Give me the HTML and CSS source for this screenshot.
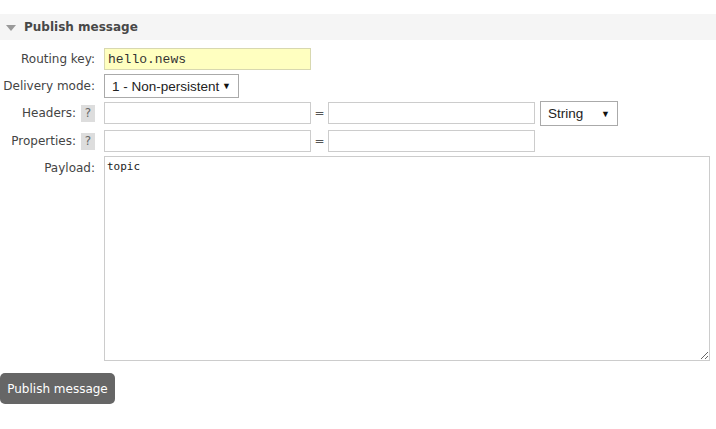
FILE: index.html
```html
<!DOCTYPE html>
<html>
<head>
<meta charset="utf-8">
<link rel="stylesheet" href="styles.css">
</head>
<body>
<div class="section">
  <h2 class="section-head"><span class="tri"></span>Publish message</h2>
  <div class="form">
    <div class="row">
      <label class="lbl">Routing key:</label>
      <input class="inp mono key" type="text" value="hello.news">
    </div>
    <div class="row row-dm">
      <label class="lbl">Delivery mode:</label>
      <div class="sel sel-dm"><span>1 - Non-persistent</span><span class="arrow">▼</span></div>
    </div>
    <div class="row row-h">
      <label class="lbl">Headers: <span class="help">?</span></label>
      <input class="inp" type="text">
      <span class="eq">=</span>
      <input class="inp" type="text">
      <div class="sel sel-str"><span>String</span><span class="arrow">▼</span></div>
    </div>
    <div class="row">
      <label class="lbl">Properties: <span class="help">?</span></label>
      <input class="inp" type="text">
      <span class="eq">=</span>
      <input class="inp" type="text">
    </div>
    <div class="row top">
      <label class="lbl lbl-top">Payload:</label>
      <textarea class="payload">topic</textarea>
    </div>
  </div>
  <button class="btn">Publish message</button>
</div>
</body>
</html>
```
FILE: styles.css
```css
html, body { margin: 0; padding: 0; background: #fff; }
body { font-family: "DejaVu Sans", Verdana, sans-serif; font-size: 12px; color: #444; }
.section { padding-top: 14px; }
.section-head {
  margin: 0; height: 26px; background: #f5f5f5; color: #484848;
  font-size: 12px; font-weight: bold; display: flex; align-items: center;
  padding-left: 6px; box-sizing: border-box;
}
.tri {
  width: 0; height: 0; border-left: 5px solid transparent; border-right: 5px solid transparent;
  border-top: 6px solid #999; margin-right: 8px; margin-top: 1px;
}
.form { padding-top: 8px; display: flex; flex-direction: column; gap: 4px; }
.row { display: flex; align-items: center; height: 22px; }
.row-dm { height: 24px; }
.row-h { height: 24px; align-items: flex-start; }
.row-h .lbl, .row-h .eq { height: 22px; }
.row.top { align-items: flex-start; height: auto; }
.lbl {
  width: 95px; text-align: right; margin-right: 9px; color: #444; font-size: 12px;
  display: flex; justify-content: flex-end; align-items: center; gap: 5px; white-space: nowrap;
}
.lbl-top { padding-top: 5px; }
.help {
  display: inline-block; width: 14px; height: 17px; line-height: 17px; text-align: center;
  background: #ddd; color: #666; font-size: 12px;
}
.inp {
  width: 207px; height: 22px; box-sizing: border-box; border: 1px solid #ccc; margin: 0;
  padding: 0 3px; font-family: "Liberation Sans", Arial, sans-serif; font-size: 13px; background: #fff;
  outline: none;
}
.key { background: #ffffc0; border-color: #d8d8b0; }
.mono { font-family: "Liberation Mono", "Courier New", monospace; font-size: 13px; color: #333; }
.eq { width: 17px; text-align: center; color: #555; font-size: 12px; display: flex; align-items: center; justify-content: center; }
.sel {
  height: 24px; box-sizing: border-box; border: 1px solid #aaa; background: #fff;
  display: flex; align-items: center; justify-content: space-between;
  font-family: "Liberation Sans", Arial, sans-serif; font-size: 13.5px; color: #222; padding: 0 7px 0 7px;
}
.sel .arrow { font-size: 9px; color: #111; }
.sel-dm { width: 135px; }
.sel-str { width: 78px; margin-left: 5px; height: 25px; margin-top: -1px; }
.payload {
  width: 606px; height: 205px; box-sizing: border-box; border: 1px solid #ccc; margin: 0;
  padding: 3px 2px; font-family: "DejaVu Sans Mono", monospace; font-size: 11px; color: #222;
  resize: both; outline: none;
}
.btn {
  display: block; margin-top: 12px; margin-left: 0; height: 31px; width: 115px;
  background: #666; color: #fff; border: none; border-radius: 5px;
  font-family: "DejaVu Sans", Verdana, sans-serif; font-size: 12px; padding: 0;
}
```
